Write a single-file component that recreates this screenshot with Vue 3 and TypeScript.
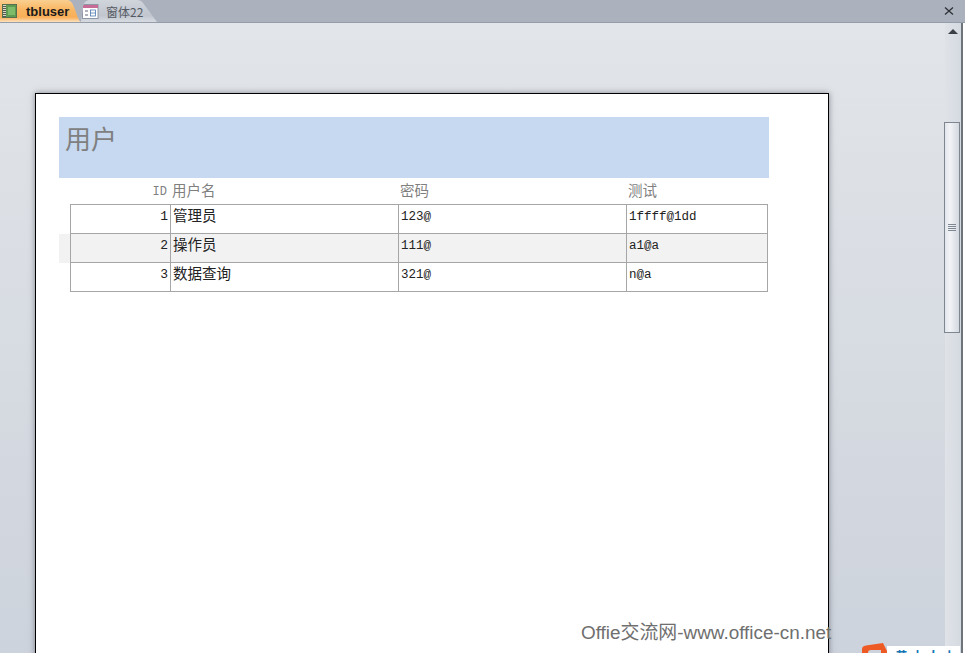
<script setup lang="ts">
const rows = [
  { id: 1, name: '管理员', pwd: '123@', test: '1ffff@1dd' },
  { id: 2, name: '操作员', pwd: '111@', test: 'a1@a' },
  { id: 3, name: '数据查询', pwd: '321@', test: 'n@a' },
]
</script>

<template>
  <div class="app">
    <div class="tabbar">
      <div class="tab active">
        <svg class="ico" width="15" height="16" viewBox="0 0 15 16">
          <rect x="0.500" y="1.500" width="14" height="13" fill="#5f9a52" stroke="#56704d" />
          <rect x="1" y="2" width="3" height="12" fill="#dcdcc0" />
          <path d="M1 3.500h3M1 5.500h3M1 7.500h3M1 9.500h3M1 11.500h3M1 13.500h3" stroke="#555" />
          <rect x="6" y="4" width="7" height="8" fill="#7fbc6a" />
        </svg>
        <span class="tab-label">tbluser</span>
      </div>
      <div class="tab inactive">
        <svg class="ico" width="17" height="17" viewBox="0 0 17 17">
          <rect x="0.500" y="1.500" width="15.500" height="14" fill="#fff" stroke="#8d97a8" />
          <rect x="1" y="2" width="15" height="3" fill="#c76a96" />
          <path d="M3 8h3M3 12h3" stroke="#5c6678" />
          <rect x="8.500" y="7" width="5" height="6" fill="#fff" stroke="#4a78b0" stroke-width="0.800" />
          <path d="M8.500 10h5" stroke="#4a78b0" stroke-width="0.800" />
        </svg>
        <span class="tab-label2">窗体22</span>
      </div>
      <div class="spacer"></div>
      <svg class="close" width="10" height="10" viewBox="0 0 10 10">
        <path d="M1 1.500l8 7M9 1.500l-8 7" stroke="#2e3136" stroke-width="1.300" />
      </svg>
    </div>

    <div class="body">
      <div class="canvas">
        <div class="page">
          <div class="title-band">用户</div>
          <div class="grid head">
            <div class="hd right">ID</div>
            <div class="hd">用户名</div>
            <div class="hd">密码</div>
            <div class="hd">测试</div>
          </div>
          <div
            v-for="(r, i) in rows"
            :key="r.id"
            class="row"
            :class="{ alt: i === 1, top: i === 0 }"
          >
            <div class="grid cells" :class="{ first: i === 0 }">
              <div class="cell right">{{ r.id }}</div>
              <div class="cell cjk">{{ r.name }}</div>
              <div class="cell">{{ r.pwd }}</div>
              <div class="cell">{{ r.test }}</div>
            </div>
          </div>
        </div>
      </div>
      <div class="scrollbar">
        <div class="arrow"></div>
        <div class="track-top"></div>
        <div class="thumb">
          <div class="grip"></div>
        </div>
      </div>
      <div class="edge"></div>
    </div>

    <div class="watermark">Offie交流网-www.office-cn.net</div>
    <div class="logo">
      <svg width="103" height="10" viewBox="0 0 103 10">
        <rect x="25" y="3" width="73" height="7" fill="#fff" />
        <path d="M0 10V6Q0 3 4 2.500L21 0L25 8V10H19V7H9Q6 7 6 10Z" fill="#ee5a24" />
      </svg>
      <span class="logo-text">黄 士 人 小</span>
    </div>
  </div>
</template>

<style>
html, body { margin: 0; padding: 0; overflow: hidden; }
</style>

<style scoped>
.app {
  position: relative;
  width: 965px;
  height: 653px;
  overflow: hidden;
  font-family: "Liberation Serif", "Noto Sans CJK SC", serif;
  display: flex;
  flex-direction: column;
}
.tabbar {
  height: 22px;
  flex: none;
  background: #abb2be;
  border-bottom: 1px solid #959da9;
  box-sizing: content-box;
  display: flex;
  align-items: stretch;
}
.tab {
  display: flex;
  align-items: center;
  height: 22px;
}
.active {
  width: 81px;
  flex: none;
  background: linear-gradient(#f9cf90 0%, #f9b662 45%, #f9ae58 78%, #fde2bd 100%);
  padding-left: 2px;
  box-sizing: border-box;
  clip-path: path("M0 0H68Q72 1 74 7L78 18Q79 21 81 22H0Z");
}
.ico { flex: none; }
.tab-label {
  margin-left: 9px;
  font: bold 13px "Liberation Sans", sans-serif;
  color: #1a1a1a;
}
.inactive {
  width: 76px;
  flex: none;
  padding-left: 1px;
  box-sizing: border-box;
  background: linear-gradient(#d0d4db, #c1c6cf 70%, #d7dbe1);
  clip-path: path("M0 22L2 6Q3 1 8 0H56Q60 0 62 3L76 22Z");
}
.tab-label2 {
  margin-left: 7px;
  font: 12px "Noto Sans CJK SC", sans-serif;
  color: #555a62;
}
.spacer { flex: 1; }
.close { align-self: center; margin-right: 11px; margin-top: -1px; }

.body {
  flex: 1;
  display: flex;
  min-height: 0;
  background: linear-gradient(#e2e5e9, #cdd3dc);
}
.canvas {
  flex: none;
  width: 945px;
  padding: 70px 0 0 35px;
  box-sizing: border-box;
}
.page {
  width: 794px;
  height: 600px;
  box-sizing: border-box;
  background: #fff;
  border: 1px solid #000;
  box-shadow: 0 0 6px rgba(70, 75, 85, 0.6);
  padding: 23px 0 0 23px;
}
.title-band {
  width: 710px;
  height: 61px;
  background: #c6d9f0;
  color: #808080;
  font: 26px/42px "Noto Sans CJK SC", sans-serif;
  padding-left: 6px;
  box-sizing: border-box;
}
.grid {
  display: grid;
  grid-template-columns: 100px 228px 228px 141px;
  margin-left: 11px;
  width: 698px;
  box-sizing: border-box;
}
.head {
  height: 26px;
  color: #7f7f7f;
  font-family: "Liberation Mono", "Noto Sans CJK SC", monospace;
}
.hd { padding-left: 2px; font-size: 14.500px; line-height: 29px; height: 26px; }
.hd.right { text-align: right; padding-right: 3px; padding-left: 0; font-size: 12px; }
.row { width: 710px; height: 29px; }
.row.top { height: 30px; }
.row.alt { background: #f2f2f2; width: 708px; }
.cells {
  height: 29px;
  border-left: 1px solid #a6a6a6;
  border-right: 1px solid #a6a6a6;
  border-bottom: 1px solid #a6a6a6;
  color: #222;
}
.cells.first { border-top: 1px solid #a6a6a6; height: 30px; }
.cell {
  border-right: 1px solid #a6a6a6;
  padding-left: 2px;
  font: 12.500px/24px "Liberation Mono", "Noto Sans CJK SC", monospace;
  box-sizing: border-box;
}
.cell:last-child { border-right: 0; }
.cell.cjk { font-size: 14.500px; }
.cell.right { text-align: right; padding-right: 2px; font-size: 13px; }

.scrollbar {
  flex: none;
  width: 16px;
  background: linear-gradient(90deg, #dfe3e8, #d5dae1);
  display: flex;
  flex-direction: column;
  align-items: stretch;
}
.arrow {
  width: 0;
  height: 0;
  margin: 6px auto 0;
  border-left: 5px solid transparent;
  border-right: 5px solid transparent;
  border-bottom: 5px solid #3a3f47;
}
.track-top { height: 88px; flex: none; }
.thumb {
  height: 211px;
  width: 16px;
  margin-left: -1px;
  flex: none;
  box-sizing: border-box;
  border: 1px solid #7e8690;
  background: linear-gradient(90deg, #e2e6ec, #f1f3f6 35%, #dfe3e9 75%, #d2d7de);
  display: flex;
  align-items: center;
  justify-content: center;
}
.grip {
  width: 8px;
  height: 7px;
  background: repeating-linear-gradient(#7f8791 0 1px, transparent 1px 2px);
}
.edge {
  flex: 1;
  border-left: 2px solid #6e747c;
  background: #fff;
}
.watermark {
  position: absolute;
  left: 581px;
  top: 622px;
  font: 18.900px/22px "Liberation Sans", "Noto Sans CJK SC", sans-serif;
  color: #6f6f6f;
  white-space: nowrap;
}
.logo {
  position: absolute;
  left: 862px;
  top: 643px;
  width: 98px;
  height: 10px;
  overflow: hidden;
  line-height: 0;
}
.logo-text {
  position: absolute;
  left: 33px;
  top: 6px;
  font: bold 13px/13px "Noto Sans CJK SC", sans-serif;
  color: #1976b5;
  white-space: nowrap;
}
</style>
